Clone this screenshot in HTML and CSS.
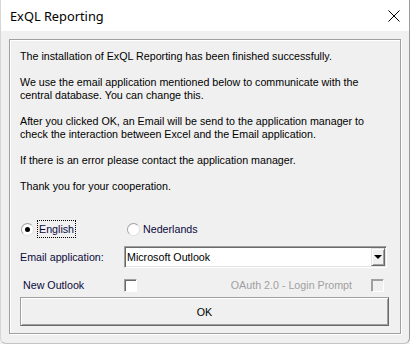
FILE: index.html
```html
<!DOCTYPE html>
<html lang="en">
<head>
  <meta charset="UTF-8">
  <meta name="viewport" content="width=device-width, initial-scale=1.0">
  <title>ExQL Reporting</title>
  <link rel="stylesheet" href="styles.css">
</head>
<body>

  <div class="window">
    <div class="titlebar">
      <span class="title">ExQL Reporting</span>
      <svg class="close-icon" width="12" height="12" viewBox="0 0 12 12">
        <path d="M0.5 0.5 L11.5 11.5 M11.5 0.5 L0.5 11.5" stroke="#000" stroke-width="1"/>
      </svg>
    </div>

    <div class="client">
      <div class="frame">
        <p>The installation of ExQL Reporting has been finished successfully.</p>
        <p>We use the email application mentioned below to communicate with the<br>central database. You can change this.</p>
        <p>After you clicked OK, an Email will be send to the application manager to<br>check the interaction between Excel and the Email application.</p>
        <p>If there is an error please contact the application manager.</p>
        <p>Thank you for your cooperation.</p>

        <div class="lang-row">
          <label class="radio-option first">
            <span class="radio checked"></span>
            <span class="focus-label">English</span>
          </label>
          <label class="radio-option">
            <span class="radio"></span>
            <span class="radio-label">Nederlands</span>
          </label>
        </div>

        <div class="form-row">
          <span class="label">Email application:</span>
          <div class="combobox">
            <span class="combo-value">Microsoft Outlook</span>
            <span class="combo-button"><span class="arrow"></span></span>
          </div>
        </div>

        <div class="form-row options-row">
          <span class="label indent">New Outlook</span>
          <span class="checkbox"></span>
          <span class="disabled-label">OAuth 2.0 - Login Prompt</span>
          <span class="checkbox disabled"></span>
        </div>

        <button type="button" class="ok-button">OK</button>
      </div>
    </div>
  </div>

</body>
</html>
```

FILE: styles.css
```css
body {
  margin: 0;
  font-family: "Liberation Sans", Arial, sans-serif;
  font-size: 10.7px;
  background-color: #f0f0f0;
}
.window {
  width: 408px;
  height: 343px;
  border-right: 1px solid #9a9a9a;
  border-left: 1px solid #d6d6d6;
  border-bottom: 1px solid #c4c4c4;
  border-radius: 0 0 6px 6px;
  background-color: #f0f0f0;
  overflow: hidden;
}
.titlebar {
  height: 31px;
  background-color: #fff;
  display: flex;
  align-items: center;
  justify-content: space-between;
  padding: 0 9px 0 9px;
}
.title {
  font-family: "Noto Sans", "Open Sans", sans-serif;
  font-size: 12.8px;
  color: #000;
}
.close-icon {
  display: block;
}
.client {
  padding: 8px 0 0 8px;
}
.frame {
  width: 369px;
  height: 283px;
  border: 1px solid #a0a0a0;
  box-shadow: inset 1px 1px #fff, 1px 1px #fff;
  padding: 10px 11px 0 10px;
}
p {
  margin: 0 0 13px;
  line-height: 13px;
  color: #000;
}
.lang-row {
  display: flex;
  align-items: center;
  height: 18px;
  margin-top: 27px;
  color: #0a0a3c;
}
.radio-option {
  display: flex;
  align-items: center;
}
.radio-option.first {
  width: 106px;
}
.radio {
  width: 11px;
  height: 11px;
  border-radius: 50%;
  border: 1px solid #a0a0a0;
  border-right-color: #e0e0e0;
  border-bottom-color: #e0e0e0;
  background-color: #fff;
  position: relative;
  margin-left: 1px;
}
.radio.checked::after {
  content: "";
  position: absolute;
  left: 3px;
  top: 3px;
  width: 5px;
  height: 5px;
  border-radius: 50%;
  background-color: #000;
}
.focus-label {
  margin-left: 3px;
  padding: 2px 1px 2px 1px;
  border: 1px dotted #000;
}
.radio-label {
  margin-left: 3px;
}
.form-row {
  display: grid;
  grid-template-columns: 104px 1fr;
  align-items: center;
  margin-top: 8px;
  color: #0a0a3c;
}
.combobox {
  height: 18px;
  width: 258px;
  display: flex;
  align-items: center;
  justify-content: space-between;
  background-color: #fff;
  border: 1px solid;
  border-color: #a0a0a0 #fff #fff #a0a0a0;
  box-shadow: inset 1px 1px #696969, inset -1px -1px #e3e3e3;
  padding: 1px 1px 1px 2px;
  color: #000;
}
.combo-button {
  width: 12px;
  height: 16px;
  background-color: #f0f0f0;
  border: 1px solid;
  border-color: #e3e3e3 #696969 #696969 #e3e3e3;
  box-shadow: inset 1px 1px #fff, inset -1px -1px #a0a0a0;
  display: flex;
  align-items: center;
  justify-content: center;
}
.arrow {
  width: 0;
  height: 0;
  border-left: 4px solid transparent;
  border-right: 4px solid transparent;
  border-top: 4px solid #000;
}
.options-row {
  grid-template-columns: 104px 13px 1fr 13px;
  margin-top: 10px;
  height: 14px;
  padding-right: 5px;
}
.indent {
  padding-left: 3px;
}
.checkbox {
  width: 11px;
  height: 11px;
  border: 1px solid;
  border-color: #a0a0a0 #fff #fff #a0a0a0;
  box-shadow: inset 1px 1px #696969;
  background-color: #fff;
}
.checkbox.disabled {
  background-color: #f0f0f0;
  box-shadow: inset 1px 1px #a0a0a0;
}
.disabled-label {
  color: #a0a0a0;
  text-align: right;
  padding-right: 19px;
}
.ok-button {
  display: block;
  width: 369px;
  height: 29px;
  margin-top: 5px;
  font-family: "Liberation Sans", Arial, sans-serif;
  font-size: 10.7px;
  color: #000;
  background-color: #f0f0f0;
  border: 1px solid;
  border-color: #a0a0a0 #696969 #696969 #a0a0a0;
  box-shadow: inset 1px 1px #fff, inset -1px -1px #a0a0a0;
}
```
